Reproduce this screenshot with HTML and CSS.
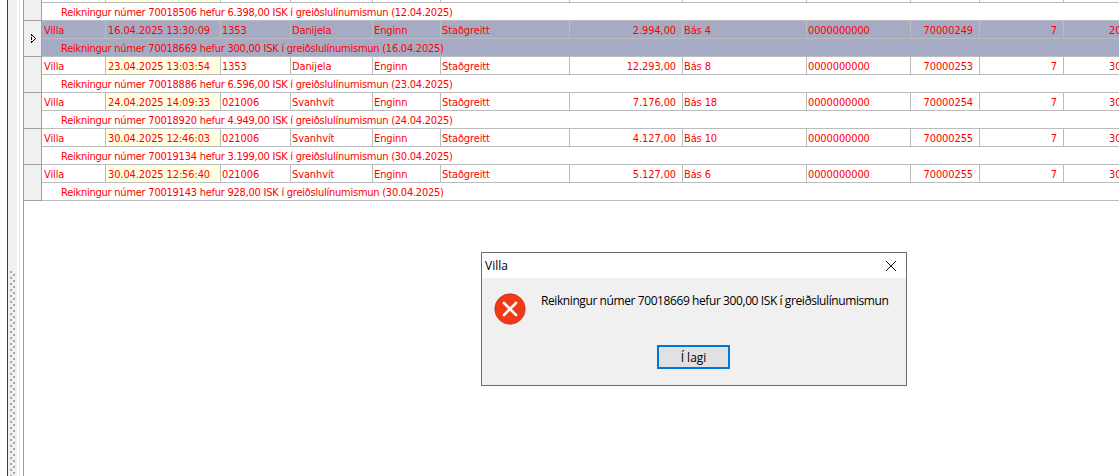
FILE: index.html
```html
<!DOCTYPE html>
<html lang="is">
<head>
<meta charset="utf-8">
<title>Villa</title>
<link rel="stylesheet" href="styles.css">
</head>
<body>
<div class="app">
  <aside class="rail">
    <div class="rail-blue"></div>
    <div class="splitter"><div class="grip"></div></div>
    <div class="rail-gap"></div>
    <div class="rail-line"></div>
  </aside>
  <main class="grid">
    <section class="group">
      <div class="rowhead"></div>
      <div class="rows">
        <div class="row stub">
          <div class="c c1"></div><div class="c c2"></div><div class="c c3"></div><div class="c c4"></div><div class="c c5"></div><div class="c c6"></div><div class="c c7"></div><div class="c c8"></div><div class="c c9"></div><div class="c c10"></div><div class="c c11"></div>
        </div>
        <div class="sub">Reikningur númer 70018506 hefur 6.398,00 ISK í greiðslulínumismun (12.04.2025)</div>
      </div>
    </section>
    <section class="group selected">
      <div class="rowhead"><svg class="arrow" width="5" height="9" viewBox="0 0 5 9"><path d="M0 0h1v2h-1zM0 3h1v3h-1zM0 7h1v2h-1zM1 1h1v1h-1zM2 2h1v1h-1zM3 3h1v1h-1zM4 4h1v1h-1zM3 5h1v1h-1zM2 6h1v1h-1zM1 7h1v1h-1z" fill="#000"/></svg></div>
      <div class="rows">
        <div class="row">
          <div class="c c1">Villa</div><div class="c c2">16.04.2025 13:30:09</div><div class="c c3">1353</div><div class="c c4">Danijela</div><div class="c c5">Enginn</div><div class="c c6">Staðgreitt</div><div class="c c7 num">2.994,00</div><div class="c c8">Bás 4</div><div class="c c9">0000000000</div><div class="c c10 num">70000249</div><div class="c c11 num">7</div><div class="c c12">20</div>
        </div>
        <div class="sub">Reikningur númer 70018669 hefur 300,00 ISK í greiðslulínumismun (16.04.2025)</div>
      </div>
    </section>
    <section class="group">
      <div class="rowhead"></div>
      <div class="rows">
        <div class="row">
          <div class="c c1">Villa</div><div class="c c2">23.04.2025 13:03:54</div><div class="c c3">1353</div><div class="c c4">Danijela</div><div class="c c5">Enginn</div><div class="c c6">Staðgreitt</div><div class="c c7 num">12.293,00</div><div class="c c8">Bás 8</div><div class="c c9">0000000000</div><div class="c c10 num">70000253</div><div class="c c11 num">7</div><div class="c c12">30</div>
        </div>
        <div class="sub">Reikningur númer 70018886 hefur 6.596,00 ISK í greiðslulínumismun (23.04.2025)</div>
      </div>
    </section>
    <section class="group">
      <div class="rowhead"></div>
      <div class="rows">
        <div class="row">
          <div class="c c1">Villa</div><div class="c c2">24.04.2025 14:09:33</div><div class="c c3">021006</div><div class="c c4">Svanhvít</div><div class="c c5">Enginn</div><div class="c c6">Staðgreitt</div><div class="c c7 num">7.176,00</div><div class="c c8">Bás 18</div><div class="c c9">0000000000</div><div class="c c10 num">70000254</div><div class="c c11 num">7</div><div class="c c12">30</div>
        </div>
        <div class="sub">Reikningur númer 70018920 hefur 4.949,00 ISK í greiðslulínumismun (24.04.2025)</div>
      </div>
    </section>
    <section class="group">
      <div class="rowhead"></div>
      <div class="rows">
        <div class="row">
          <div class="c c1">Villa</div><div class="c c2">30.04.2025 12:46:03</div><div class="c c3">021006</div><div class="c c4">Svanhvít</div><div class="c c5">Enginn</div><div class="c c6">Staðgreitt</div><div class="c c7 num">4.127,00</div><div class="c c8">Bás 10</div><div class="c c9">0000000000</div><div class="c c10 num">70000255</div><div class="c c11 num">7</div><div class="c c12">30</div>
        </div>
        <div class="sub">Reikningur númer 70019134 hefur 3.199,00 ISK í greiðslulínumismun (30.04.2025)</div>
      </div>
    </section>
    <section class="group">
      <div class="rowhead"></div>
      <div class="rows">
        <div class="row">
          <div class="c c1">Villa</div><div class="c c2">30.04.2025 12:56:40</div><div class="c c3">021006</div><div class="c c4">Svanhvít</div><div class="c c5">Enginn</div><div class="c c6">Staðgreitt</div><div class="c c7 num">5.127,00</div><div class="c c8">Bás 6</div><div class="c c9">0000000000</div><div class="c c10 num">70000255</div><div class="c c11 num">7</div><div class="c c12">30</div>
        </div>
        <div class="sub">Reikningur númer 70019143 hefur 928,00 ISK í greiðslulínumismun (30.04.2025)</div>
      </div>
    </section>
  </main>
</div>
<div class="dialog">
  <header class="titlebar">
    <span class="title">Villa</span>
    <svg class="close" width="10" height="10" viewBox="0 0 10 10"><path d="M0 0L10 10M10 0L0 10" stroke="#111" stroke-width="1" fill="none"/></svg>
  </header>
  <div class="dialog-body">
    <div class="message">
      <svg class="err" width="32" height="32" viewBox="0 0 32 32"><circle cx="16" cy="16" r="15.2" fill="#f03a17" stroke="#c9361a" stroke-width="0.8"/><path d="M10 10L22 22M22 10L10 22" stroke="#fff" stroke-width="2.6" stroke-linecap="round" fill="none"/></svg>
      <p class="msg-text">Reikningur númer 70018669 hefur 300,00 ISK í greiðslulínumismun</p>
    </div>
    <div class="actions"><button class="ok" type="button">Í lagi</button></div>
  </div>
</div>
</body>
</html>
```
FILE: styles.css
```css
html, body {
  margin: 0;
  padding: 0;
  background: #fff;
}
body {
  width: 1119px;
  height: 476px;
  overflow: hidden;
  position: relative;
}
.app {
  display: flex;
  height: 476px;
  font-family: "DejaVu Sans Condensed", "DejaVu Sans", sans-serif;
  font-stretch: condensed;
  font-size: 11px;
  letter-spacing: -0.115px;
  color: #ff0000;
}
.rail {
  flex: none;
  width: 23px;
  display: flex;
  padding-left: 7px;
  box-sizing: border-box;
}
.rail-blue {
  width: 1px;
  background: #1b3f93;
}
.splitter {
  width: 9px;
  background: #f0f0f0;
  display: flex;
  flex-direction: column;
}
.grip {
  margin-top: 271px;
  flex: 1;
  background-image:
    linear-gradient(#a6a6a6 2px, transparent 2px),
    linear-gradient(#a6a6a6 2px, transparent 2px);
  background-size: 2px 6px, 2px 6px;
  background-repeat: repeat-y;
  background-position: 2px 0, 5px 3px;
}
.rail-gap {
  width: 2px;
}
.rail-line {
  width: 1px;
  background: #e2e2e2;
}
.grid {
  flex: 1;
  min-width: 0;
  border-left: 1px solid #a0a0a0;
  overflow: hidden;
}
.group {
  display: flex;
}
.rowhead {
  flex: none;
  width: 10px;
  background: #f0f0f0;
  border-right: 1px solid #a0a0a0;
  border-bottom: 1px solid #a0a0a0;
  display: flex;
  align-items: center;
  padding-left: 7px;
}
.arrow {
  display: block;
}
.rows {
  flex: 1;
  min-width: 0;
}
.row {
  display: flex;
  height: 17px;
  border-bottom: 1px solid #bcbcbc;
}
.stub {
  height: 2px;
}
.c {
  flex: none;
  box-sizing: border-box;
  border-right: 1px solid #bcbcbc;
  padding: 0 2px 0 1px;
  line-height: 19px;
  white-space: nowrap;
  overflow: hidden;
}
.c1 { width: 64px; padding-left: 2px; }
.c2 { width: 115px; padding-left: 2px; background: #ffffe1; }
.c3 { width: 70px; }
.c4 { width: 82px; }
.c5 { width: 68px; }
.c6 { width: 129px; }
.c7 { width: 113px; }
.c8 { width: 124px; }
.c9 { width: 104px; }
.c10 { width: 69px; }
.c11 { width: 84px; }
.c12 { flex: 1; min-width: 0; border-right: 0; padding-left: 45px; }
.num {
  text-align: right;
  padding-right: 6px;
}
.sub {
  height: 17px;
  line-height: 19px;
  padding-left: 19px;
  border-bottom: 1px solid #bcbcbc;
  letter-spacing: -0.245px;
  white-space: nowrap;
  overflow: hidden;
}
.selected .rows {
  background: #a6abc5;
}
.selected .c2 {
  background: transparent;
}
.dialog {
  position: absolute;
  left: 481px;
  top: 252px;
  width: 426px;
  height: 134px;
  box-sizing: border-box;
  border: 1px solid #6e6e6e;
  background: #f0f0f0;
  display: flex;
  flex-direction: column;
  font-family: "Open Sans", "Noto Sans", sans-serif;
  font-size: 12px;
  color: #000;
}
.titlebar {
  flex: none;
  height: 25px;
  background: #fff;
  display: flex;
  align-items: center;
  justify-content: space-between;
  padding: 0 10px 0 3px;
}
.dialog-body {
  flex: 1;
  display: flex;
  flex-direction: column;
}
.message {
  display: flex;
  padding: 15px 0 0 12px;
  height: 67px;
  box-sizing: border-box;
}
.err {
  flex: none;
  display: block;
}
.msg-text {
  margin: 0 0 0 15px;
  line-height: 16px;
  letter-spacing: -0.41px;
  white-space: nowrap;
}
.actions {
  display: flex;
  justify-content: center;
  padding-right: 1px;
}
.ok {
  width: 73px;
  height: 24px;
  box-sizing: border-box;
  border: 2px solid #0078d7;
  background: #e1e1e1;
  padding: 0;
  font: inherit;
  color: #000;
}
```
